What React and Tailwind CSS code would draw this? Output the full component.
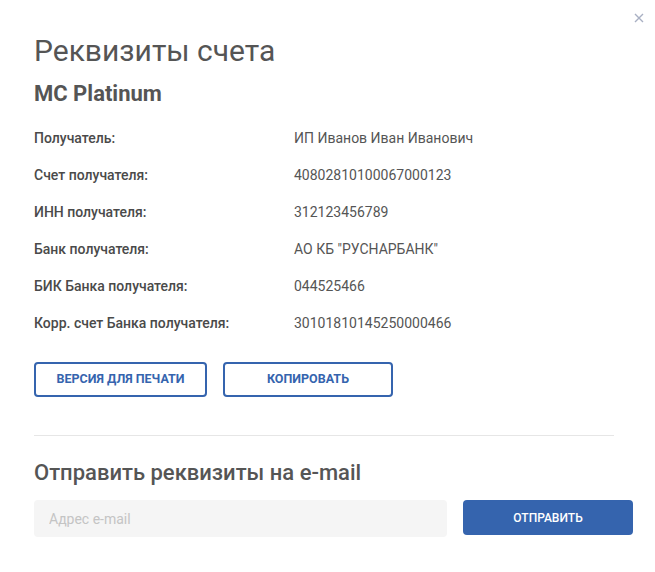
import React from "react";

const rows = [
  { label: "Получатель:", value: "ИП Иванов Иван Иванович" },
  { label: "Счет получателя:", value: "40802810100067000123" },
  { label: "ИНН получателя:", value: "312123456789" },
  { label: "Банк получателя:", value: 'АО КБ "РУСНАРБАНК"' },
  { label: "БИК Банка получателя:", value: "044525466" },
  { label: "Корр. счет Банка получателя:", value: "30101810145250000466" },
];

export default function App() {
  return (
    <div className="relative w-[655px] h-[572px] bg-white pl-[34px] pt-[34px] font-['Roboto',sans-serif]">
      <button className="absolute right-[11px] top-[13px] w-[10px] h-[10px] flex items-center justify-center">
        <svg width="10" height="10" viewBox="0 0 10 10">
          <path d="M1 1L9 9M9 1L1 9" stroke="#a9b0c3" strokeWidth="1.4" fill="none" />
        </svg>
      </button>

      <h1 className="text-[30px] leading-[34px] font-normal text-[#555]">Реквизиты счета</h1>
      <h2 className="mt-[13px] text-[22px] leading-[26px] font-bold text-[#555]">MC Platinum</h2>

      <div className="mt-[21px] grid grid-cols-[260px_1fr] gap-y-[17px] text-[14px] leading-[20px]">
        {rows.map((row) => (
          <React.Fragment key={row.label}>
            <div className="font-medium text-[#4a4a4a]">{row.label}</div>
            <div className="text-[#555]">{row.value}</div>
          </React.Fragment>
        ))}
      </div>

      <div className="mt-[29px] flex gap-4">
        <button className="w-[173px] h-[35px] rounded-[4px] border-2 border-[#3564ae] text-[12.5px] font-bold text-[#3564ae] uppercase">
          Версия для печати
        </button>
        <button className="w-[170px] h-[35px] rounded-[4px] border-2 border-[#3564ae] text-[12.5px] font-bold text-[#3564ae] uppercase">
          Копировать
        </button>
      </div>

      <div className="mt-[38px] w-[580px] h-px bg-[#e6e6e6]" />

      <h3 className="mt-[24px] text-[22px] leading-[26px] font-medium text-[#555]">
        Отправить реквизиты на e-mail
      </h3>

      <div className="mt-[14px] flex gap-4 items-start">
        <input
          type="text"
          placeholder="Адрес e-mail"
          className="w-[413px] h-[37px] rounded-[4px] bg-[#f5f5f5] px-[15px] text-[14px] text-[#555] placeholder:text-[#c4c4c4] outline-none"
        />
        <button className="w-[170px] h-[35px] rounded-[4px] bg-[#3564ae] text-white text-[12px] font-medium uppercase">
          Отправить
        </button>
      </div>
    </div>
  );
}
